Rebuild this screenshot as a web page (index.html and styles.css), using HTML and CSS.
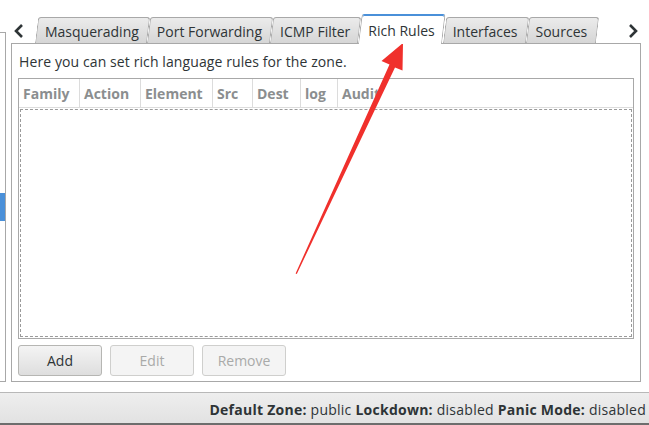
FILE: index.html
```html
<!DOCTYPE html>
<html lang="en">
<head>
    <meta charset="UTF-8">
    <title>Firewall Configuration - Rich Rules</title>
    <link rel="stylesheet" href="styles.css">
</head>
<body>
    <div class="window">
        <div class="main">
            <div class="sidebar">
                <div class="sidebar-selected"></div>
            </div>

            <div class="notebook">
                <div class="tabbar">
                    <span class="scroll-arrow">
                        <svg width="12" height="14" viewBox="0 0 12 14"><path d="M9 1 L3 7 L9 13" fill="none" stroke="#2e3436" stroke-width="2.6"/></svg>
                    </span>
                    <div class="tabs">
                        <div class="tab">Masquerading</div>
                        <div class="tab">Port Forwarding</div>
                        <div class="tab">ICMP Filter</div>
                        <div class="tab active">Rich Rules</div>
                        <div class="tab">Interfaces</div>
                        <div class="tab">Sources</div>
                    </div>
                    <span class="scroll-arrow right">
                        <svg width="12" height="14" viewBox="0 0 12 14"><path d="M3 1 L9 7 L3 13" fill="none" stroke="#2e3436" stroke-width="2.6"/></svg>
                    </span>
                </div>

                <div class="page">
                    <p class="intro">Here you can set rich language rules for the zone.</p>
                    <div class="rules-table">
                        <div class="rules-head">
                            <span class="col" style="width: 61px">Family</span>
                            <span class="col" style="width: 61px">Action</span>
                            <span class="col" style="width: 72px">Element</span>
                            <span class="col" style="width: 40px">Src</span>
                            <span class="col" style="width: 48px">Dest</span>
                            <span class="col" style="width: 37px">log</span>
                            <span class="col last">Audit</span>
                        </div>
                        <div class="rules-body"></div>
                    </div>
                    <div class="buttons">
                        <button class="btn">Add</button>
                        <button class="btn" disabled>Edit</button>
                        <button class="btn" disabled>Remove</button>
                    </div>
                </div>
            </div>
        </div>

        <div class="statusbar">
            <b>Default Zone:</b> public <b>Lockdown:</b> disabled <b>Panic Mode:</b> disabled
        </div>
    </div>

    <!-- red annotation arrow pointing at the Rich Rules tab -->
    <svg class="annotation" width="649" height="425" viewBox="0 0 649 425">
        <polygon points="403,43 402.5,70.5 395,67.5 296.8,274 295.6,273.5 389.5,64.5 381.5,61" fill="#f0302c"/>
    </svg>
</body>
</html>
```

FILE: styles.css
```css
body {
    margin: 0;
    width: 649px;
    height: 425px;
    overflow: hidden;
    background: #fff;
    font-family: "Open Sans", "DejaVu Sans", sans-serif;
    font-size: 14px;
    color: #2e3436;
    position: relative;
}

.window {
    display: flex;
    flex-direction: column;
    height: 425px;
}

.main {
    display: flex;
    height: 382px;
    padding-top: 14px;
    box-sizing: border-box;
}

.sidebar {
    width: 6px;
    height: 350px;
    margin-top: 18px;
    border: 1px solid #a8a8a8;
    border-left: none;
    box-sizing: border-box;
}

.sidebar-selected {
    margin-top: 160px;
    width: 5px;
    height: 28px;
    background: #4a90d9;
}

.notebook {
    margin-left: 5px;
    width: 630px;
    display: flex;
    flex-direction: column;
}

.tabbar {
    display: flex;
    align-items: flex-end;
    height: 30px;
    position: relative;
    z-index: 1;
}

.scroll-arrow {
    width: 24px;
    height: 30px;
    display: flex;
    align-items: center;
    padding-left: 2px;
    box-sizing: border-box;
    margin-bottom: -2px;
}

.scroll-arrow.right {
    margin-left: auto;
    width: 36px;
    justify-content: flex-end;
    padding-right: 2px;
}

.tabs {
    display: flex;
    align-items: flex-end;
}

.tab {
    position: relative;
    height: 26px;
    line-height: 29px;
    padding: 0 8px 0 10px;
    color: #2e3436;
    white-space: nowrap;
    margin-bottom: 1px;
}

.tab::before {
    content: "";
    position: absolute;
    left: 0;
    right: 0;
    top: 0;
    bottom: 0;
    border: 1px solid #a8a8a8;
    border-bottom: none;
    border-radius: 3px 3px 0 0;
    background: linear-gradient(#ebebeb, #d6d6d6);
    transform: skewX(-7deg);
    transform-origin: bottom left;
    z-index: -1;
}

.tab.active {
    height: 30px;
    line-height: 33px;
    margin-bottom: 0;
}

.tab.active::before {
    background: #fff;
    border-top: 1px solid #4a90d9;
    box-shadow: inset 0 1px 0 #4a90d9;
}

.page {
    flex: 1;
    border: 1px solid #a8a8a8;
    margin-top: -1px;
    padding: 0 6px 5px 6px;
    display: flex;
    flex-direction: column;
}

.intro {
    margin: 8px 0 0 1px;
    height: 26px;
    line-height: 20px;
    letter-spacing: 0.1px;
}

.rules-table {
    height: 261px;
    border: 1px solid #a8a8a8;
    box-sizing: border-box;
    display: flex;
    flex-direction: column;
}

.rules-head {
    display: flex;
    height: 28px;
    line-height: 30px;
    border-bottom: 1px solid #dcdcdc;
    color: #8b8e8f;
    font-weight: bold;
    overflow: hidden;
}

.col {
    padding-left: 4px;
    border-right: 1px solid #dcdcdc;
    box-sizing: border-box;
    white-space: nowrap;
    flex-shrink: 0;
}

.col.last {
    border-right: none;
    flex: 1;
}

.rules-body {
    flex: 1;
    margin: 1px 1px 1px 1px;
    border: 1px dashed #9a9a9a;
}

.buttons {
    display: flex;
    gap: 8px;
    margin-top: 6px;
}

.btn {
    width: 84px;
    height: 31px;
    font-family: inherit;
    font-size: 14px;
    color: #2e3436;
    border: 1px solid #b6b6b3;
    border-radius: 3px;
    background: linear-gradient(#f4f4f4, #dedede);
    padding: 0;
}

.btn:disabled {
    color: #a9aaa9;
    background: #f4f4f4;
    border-color: #cfcfcd;
}

.statusbar {
    margin-top: 10px;
    flex: 1;
    border-top: 1px solid #b8b8b8;
    border-bottom: 2px solid #6d6d6d;
    background: linear-gradient(#eeeeee, #e2e2e2);
    text-align: right;
    padding: 7px 3px 0 0;
    white-space: nowrap;
    letter-spacing: 0.25px;
}

.annotation {
    position: absolute;
    left: 0;
    top: 0;
    pointer-events: none;
}
```
